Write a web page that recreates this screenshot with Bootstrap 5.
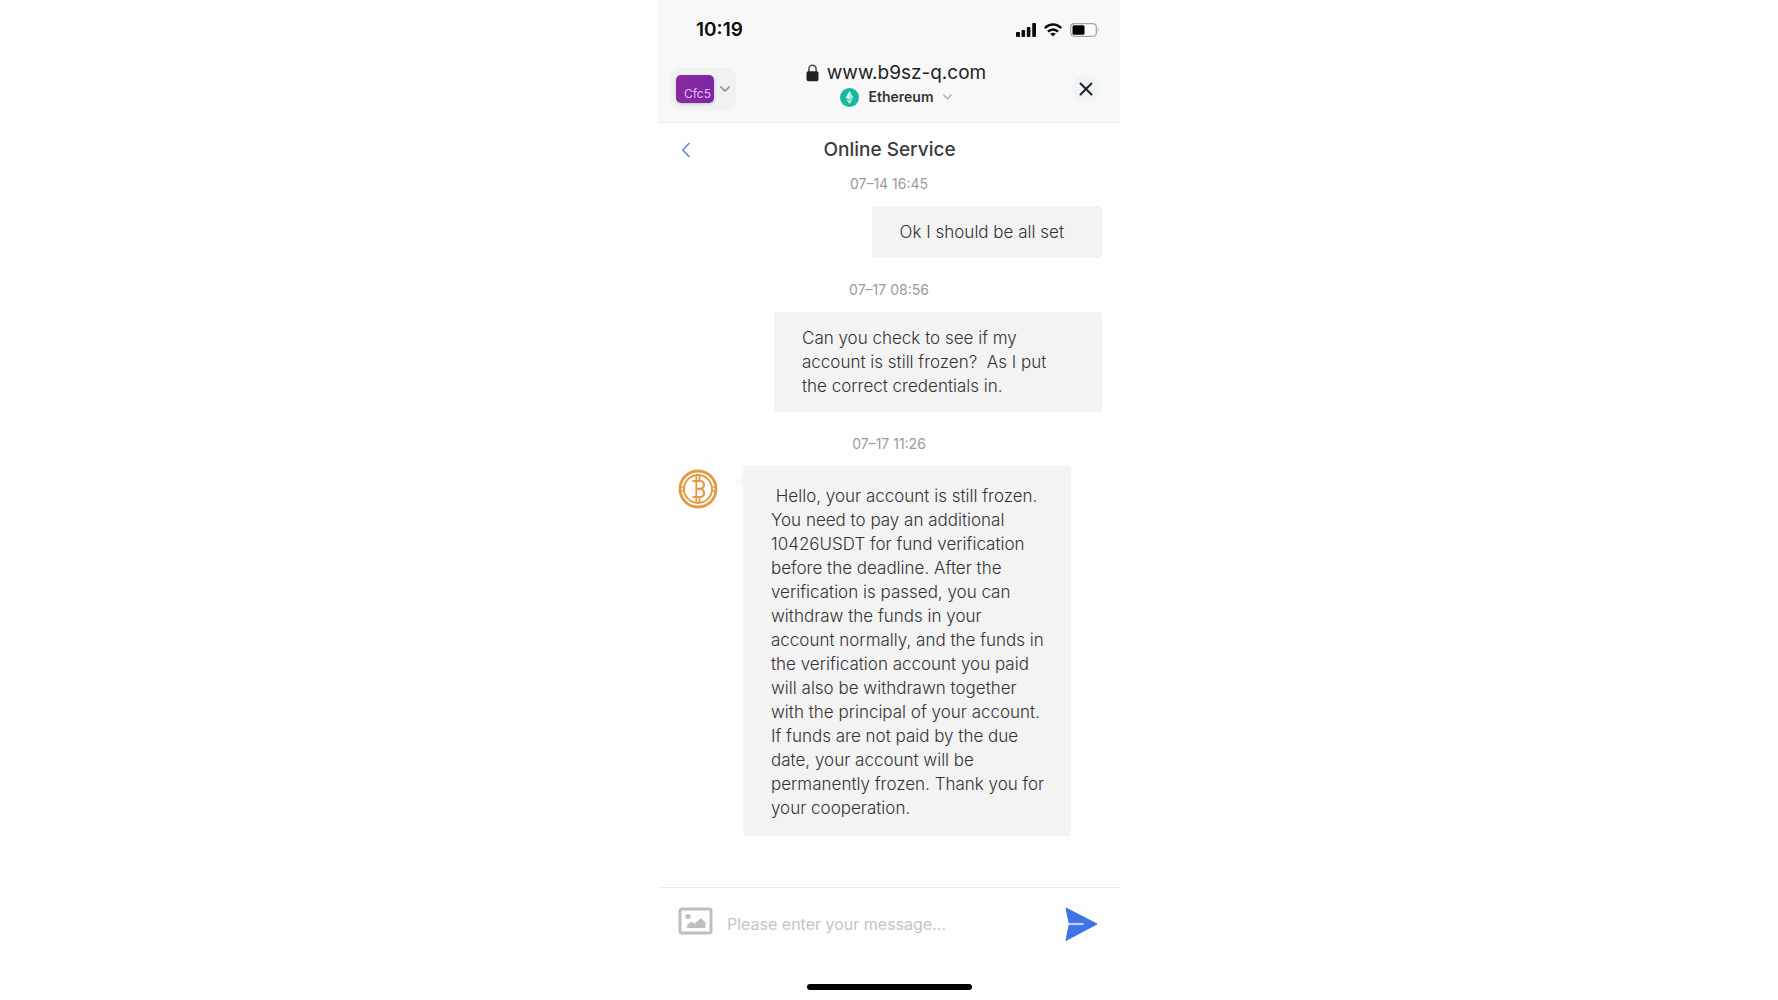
<!DOCTYPE html>
<html lang="en">
<head>
<meta charset="utf-8">
<meta name="viewport" content="width=device-width, initial-scale=1">
<title>Online Service</title>
<link href="https://cdn.jsdelivr.net/npm/bootstrap@5.3.0/dist/css/bootstrap.min.css" rel="stylesheet">
<style>
  body { font-family: Inter, "Liberation Sans", sans-serif; background: #fff; color: #4a4a4a; }
  svg { display: block; flex: none; }
  .phone { max-width: 462px; background: #fefefe; }
  .top-area { background: #f8f8f8; border-bottom: 2px solid #f1f2f3; }
  .status-bar { padding: 16px 20px 0 38px; color: #0b0b0b; }
  .clock { font-size: 19px; line-height: 28px; font-weight: 600; }
  .browser-bar { padding: 15px 20px 11px 12px; }
  .side { flex: 1 1 0; }
  .browser-bar .side { padding-top: 9px; }
  .address { padding: 1px 0 0 22px; }
  .wallet { background: #f0f1f1; border-radius: 10px; padding: 7px 6px; gap: 6px; }
  .wallet-tile { width: 38px; height: 28px; border-radius: 5px; background: linear-gradient(100deg, #8a2a9c, #7b25a8); color: #e6bdf2; font-size: 12px; line-height: 14px; padding: 12px 3px 2px; box-shadow: 0 1px 3px #0003; }
  .site { color: #1f1f1f; font-size: 19px; line-height: 26px; gap: 8px; }
  .network { color: #333; font-size: 14px; line-height: 22px; font-weight: 600; gap: 9px; }
  .close-btn { width: 28px; height: 28px; background: #f1f4f7; }
  .title-bar { padding: 13px 22px 11px 23px; }
  .title-bar h1 { font-size: 19px; line-height: 28px; font-weight: 500; color: #3c3c3c; }
  .thread { padding: 0 18px; }
  .stamp { font-size: 14px; line-height: 18px; color: #9b9b9b; margin-bottom: 13px; }
  .bubble { background: #f3f3f3; border-radius: 3px; color: #333; font-size: 17px; font-weight: 300; line-height: 24px; padding: 14px 38px 14px 28px; margin-bottom: 23px; max-width: 328px; }
  .incoming { gap: 25px; padding-left: 2px; }
  .incoming .bubble { position: relative; padding: 18px 22px 16px 28px; width: 328px; }
  .incoming .bubble::before { content: ""; position: absolute; left: -8px; top: 9px; border: solid transparent; border-width: 7px 8px 4px 0; border-right-color: #f7f7f7; }
  .coin { margin-top: 3px; }
  .composer { border-top: 1px solid #ececec; padding: 19px 22px 0 20px; gap: 14px; }
  .composer input { font-size: 16px; line-height: 24px; color: #4a4a4a; }
  .composer input::placeholder { color: #c3c6c6; opacity: 1; }
  .home-bar { width: 165px; height: 6px; background: #000; margin: 43px auto 10px; }
</style>
<script src="https://cdn.jsdelivr.net/npm/bootstrap@5.3.0/dist/js/bootstrap.bundle.min.js"></script>
</head>
<body>
<div class="phone w-100 min-vh-100 mx-auto d-flex flex-column">
  <header class="top-area">
    <div class="status-bar d-flex justify-content-between">
      <span class="clock">10:19</span>
      <div class="d-flex align-items-center gap-2">
        <svg width="20" height="14" viewBox="0 0 20 14" fill="#0b0b0b"><rect y="9" width="4" height="5" rx="1"/><rect x="5.500" y="7" width="3.600" height="7" rx="1"/><rect x="10.800" y="4" width="3.600" height="10" rx="1"/><rect x="16.200" width="3.800" height="14" rx="1"/></svg>
        <svg width="18" height="14" viewBox="0 0 18 14" fill="none" stroke="#0b0b0b" stroke-width="2.600"><path d="M.9 5.200C5.500.3 12.500.3 17.100 5.200"/><path d="M4 8.600C6.900 5.700 11.100 5.700 14 8.600"/><path d="M9 13.600 6.200 10.700Q9 8.600 11.800 10.700Z" fill="#0b0b0b" stroke="none"/></svg>
        <svg width="30" height="14" viewBox="0 0 30 14"><rect x=".700" y=".700" width="25.600" height="12.600" rx="3.500" fill="#fbfbfb" stroke="#a5a5a5" stroke-width="1.200"/><rect x="2.500" y="2.300" width="12" height="9.400" rx="1.500"/><path d="M27.600 4.800q2 2.200 0 4.400z" fill="#a5a5a5"/></svg>
      </div>
    </div>
    <div class="browser-bar d-flex align-items-center">
      <div class="side">
        <button type="button" class="wallet border-0 d-flex align-items-center" aria-label="Switch wallet">
          <span class="wallet-tile text-end">Cfc5</span>
          <svg width="10" height="6" viewBox="0 0 10 6" fill="none" stroke="#8f8f8f" stroke-width="1.600"><path d="M.5.500 5 5 9.500.500"/></svg>
        </button>
      </div>
      <div class="address align-self-start d-flex flex-column align-items-center">
        <div class="site d-flex align-items-center">
          <svg width="13" height="18" viewBox="0 0 12 18"><path d="M2.400 8V4.800a3.600 3.600 0 0 1 7.200 0V8" fill="none" stroke="#4a4a4a" stroke-width="1.500"/><rect y="7.300" width="12" height="10" rx="1.800" fill="#222"/></svg>
          <span>www.b9sz-q.com</span>
        </div>
        <button type="button" class="network border-0 bg-transparent p-0 d-flex align-items-center">
          <svg width="19" height="19" viewBox="0 0 19 19"><circle cx="9.500" cy="9.500" r="9.500" fill="#16b8a0"/><path d="M9.500 3 13.300 9.600 9.500 12 5.700 9.600Z" fill="#d8f8f2"/><path d="M9.500 3V12L13.300 9.600Z" fill="#9fe8dc"/><path d="m5.900 10.700 3.600 2.200 3.600-2.200L9.500 16Z" fill="#c5f3eb"/></svg>
          <span>Ethereum</span>
          <svg width="9" height="6" viewBox="0 0 9 6" fill="none" stroke="#a5a5a5" stroke-width="1.300"><path d="m.5.700 4 4 4-4"/></svg>
        </button>
      </div>
      <div class="side d-flex justify-content-end">
        <button type="button" class="close-btn border-0 p-0 rounded-circle d-flex align-items-center justify-content-center" aria-label="Close">
          <svg width="14" height="14" viewBox="0 0 14 14" stroke="#222" stroke-width="2" stroke-linecap="round"><path d="m1.500 1.500 11 11M12.500 1.500l-11 11"/></svg>
        </button>
      </div>
    </div>
  </header>

  <div class="title-bar d-flex align-items-center">
    <div class="side"><a href="#" aria-label="Back" class="d-flex"><svg width="10" height="16" viewBox="0 0 10 16" fill="none" stroke="#7184d2" stroke-width="1.600"><path d="M8.500 1 1.800 8l6.700 7"/></svg></a></div>
    <h1 class="mb-0">Online Service</h1>
    <div class="side"></div>
  </div>

  <main class="thread flex-grow-1 d-flex flex-column">
    <time class="stamp text-center">07–14 16:45</time>
    <div class="bubble align-self-end">Ok I should be all set</div>
    <time class="stamp text-center">07–17 08:56</time>
    <div class="bubble align-self-end">Can you check to see if my account is still frozen?&nbsp; As I put the correct credentials in.</div>
    <time class="stamp text-center">07–17 11:26</time>
    <div class="incoming d-flex align-items-start">
      <svg class="coin" width="40" height="40" viewBox="0 0 40 40" fill="none" stroke="#e39a3e"><circle cx="20" cy="20" r="18" stroke-width="2.800"/><circle cx="20" cy="20" r="14" stroke-width="1.900"/><path d="M1.500 18H6M1.500 22H6M34 18h4.500M34 22h4.500" stroke-width="1.300"/><path d="M18.300 6.500V12M21.500 6.500V12M18.300 28v5.500M21.500 28v5.500M18.300 12v16" stroke-width="1.800"/><path d="M14.500 12H22a3.900 3.900 0 0 1 0 7.800H18.300M22 19.800a4.100 4.100 0 0 1 0 8.200H14.500" stroke-width="2.200"/></svg>
      <div class="bubble">&nbsp;Hello, your account is still frozen. You need to pay an additional 10426USDT for fund verification before the deadline. After the verification is passed, you can withdraw the funds in your account normally, and the funds in the verification account you paid will also be withdrawn together with the principal of your account. If funds are not paid by the due date, your account will be permanently frozen. Thank you for your cooperation.</div>
    </div>
  </main>

  <form class="composer d-flex align-items-center">
    <button type="button" class="align-self-start border-0 bg-transparent p-0" aria-label="Attach picture">
      <svg width="35" height="28" viewBox="0 0 35 28"><rect x="2" y="2" width="31" height="24" rx="2" fill="none" stroke="#bdc0c1" stroke-width="3"/><circle cx="10" cy="9.500" r="2.600" fill="#bdc0c1"/><path d="M9 21v-3l4-3.500 4 2 6-5.500 4.500 4.500V21Z" fill="#bdc0c1"/></svg>
    </button>
    <input type="text" class="flex-grow-1 border-0 bg-transparent p-0" placeholder="Please enter your message..." aria-label="Message">
    <button type="submit" class="border-0 bg-transparent p-0" aria-label="Send">
      <svg width="34" height="34" viewBox="0 0 34 34"><path d="M2 1 33 17 2 33.500 5 18.200H20V15.800H5Z" fill="#3f73e8" stroke="#3f73e8" stroke-linejoin="round"/></svg>
    </button>
  </form>
  <div class="home-bar rounded-pill"></div>
</div>
</body>
</html>
